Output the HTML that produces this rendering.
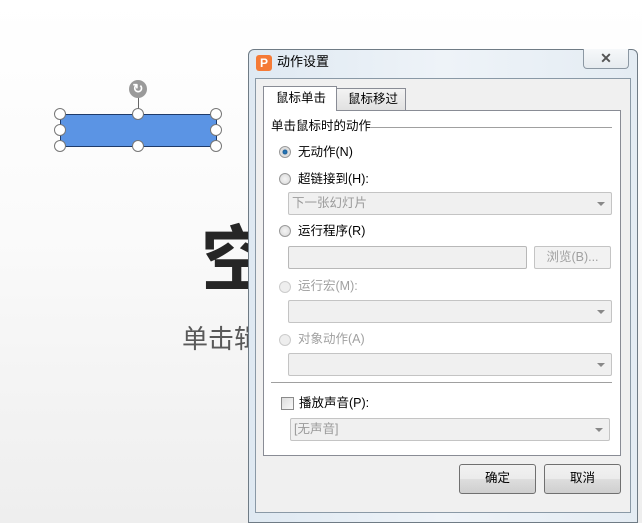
<!DOCTYPE html>
<html><head><meta charset="utf-8"><style>
*{margin:0;padding:0;box-sizing:border-box}
body{width:642px;height:523px;position:relative;overflow:hidden;background:linear-gradient(#fff 0%,#fafafa 45%,#eeeeee 100%);font-family:"Liberation Sans","Noto Sans CJK SC",sans-serif;font-size:12px;color:#000}
.a{position:absolute}
.h{position:absolute;width:12px;height:12px;border:1px solid #777;border-radius:50%;background:#fff}
.combo{position:absolute;height:23px;border:1px solid #c4c4c4;border-radius:2px;background:#f0f0f0;color:#9a9a9a;padding:0 3px;line-height:20px;font-size:12.5px}
.combo:after{content:"";position:absolute;right:6px;top:9px;border:4px solid transparent;border-top:4px solid #888}
.radio{position:absolute;width:12px;height:12px;border-radius:50%;border:1px solid #9a9a9a;background:radial-gradient(#f4f4f4,#d8d8d8)}
.lbl{position:absolute;font-size:12.5px;line-height:16px}
.btn{position:absolute;height:30px;border:1px solid #707070;border-radius:3px;background:linear-gradient(#f2f2f2 0%,#ebebeb 50%,#dddddd 51%,#cfcfcf 100%);text-align:center;line-height:27px;font-size:12.5px}
</style></head><body>
<div class="a" style="left:201px;top:218px;font-size:72px;font-weight:bold;color:#262626;line-height:1;font-family:'Noto Sans CJK SC',sans-serif">空</div>
<div class="a" style="left:182px;top:325px;font-size:26px;color:#595959;line-height:1;font-family:'Noto Sans CJK SC',sans-serif">单击辑</div>
<div class="a" style="left:60px;top:114px;width:157px;height:33px;background:#5b94e4;border:1px solid #1f3b6a"></div>
<div class="a" style="left:138px;top:96px;width:1px;height:18px;background:#666"></div>
<div class="a" style="left:129px;top:80px;width:18px;height:18px;border-radius:50%;background:#9a9a9a;color:#fff;font-size:13px;line-height:18px;text-align:center;font-weight:bold">↻</div>
<div class="h" style="left:54px;top:108px"></div><div class="h" style="left:132px;top:108px"></div><div class="h" style="left:210px;top:108px"></div>
<div class="h" style="left:54px;top:124px"></div><div class="h" style="left:210px;top:124px"></div>
<div class="h" style="left:54px;top:140px"></div><div class="h" style="left:132px;top:140px"></div><div class="h" style="left:210px;top:140px"></div>

<div class="a" style="left:248px;top:49px;width:390px;height:474px;border:1px solid #6f7b85;border-radius:6px 6px 0 0;background:linear-gradient(90deg,#dfe9f2,#eef3f8 50%,#e4ecf3)"></div>
<div class="a" style="left:583px;top:49px;width:46px;height:20px;border:1px solid #8c98a3;border-top:none;border-radius:0 0 4px 4px;background:linear-gradient(#f6f8fa,#e6ebef);text-align:center;color:#555;font-size:14px;line-height:18px;font-weight:bold">✕</div>
<div class="a" style="left:256px;top:55px;width:16px;height:16px;border-radius:3px;background:#f57a36;color:#fff;font-size:12px;font-weight:bold;line-height:16px;text-align:center">P</div>
<div class="a" style="left:277px;top:54px;font-size:13px;line-height:16px">动作设置</div>
<div class="a" style="left:255px;top:78px;width:376px;height:435px;background:#f0f0f0;border:1px solid #8a99a6"></div>
<div class="a" style="left:263px;top:110px;width:358px;height:346px;background:#fff;border:1px solid #898c95"></div>
<div class="a" style="left:336px;top:88px;width:70px;height:23px;border:1px solid #898c95;background:linear-gradient(#f3f3f3,#e1e1e1);font-size:12.5px;line-height:16px;padding:2px 0 0 11px">鼠标移过</div>
<div class="a" style="left:263px;top:86px;width:74px;height:25px;border:1px solid #898c95;border-bottom:none;background:#fff;font-size:12.5px;line-height:16px;padding:3px 0 0 12px">鼠标单击</div>
<div class="a" style="left:371px;top:127px;width:241px;height:1px;background:#a0a0a0"></div>
<div class="lbl" style="left:271px;top:118px">单击鼠标时的动作</div>
<div class="radio" style="left:279px;top:146px;background:radial-gradient(#2a7fc4 0,#1b5f9a 30%,#d9d9d9 40%,#eee 100%)"></div>
<div class="lbl" style="left:298px;top:144px">无动作(N)</div>
<div class="radio" style="left:279px;top:173px"></div>
<div class="lbl" style="left:298px;top:171px">超链接到(H):</div>
<div class="combo" style="left:288px;top:192px;width:324px">下一张幻灯片</div>
<div class="radio" style="left:279px;top:225px"></div>
<div class="lbl" style="left:298px;top:223px">运行程序(R)</div>
<div class="a" style="left:288px;top:246px;width:239px;height:23px;border:1px solid #b8b8b8;border-radius:2px;background:#f0f0f0"></div>
<div class="a" style="left:534px;top:246px;width:77px;height:23px;border:1px solid #c4c4c4;border-radius:2px;background:#f2f2f2;color:#a0a0a0;text-align:center;line-height:20px;font-size:12.5px">浏览(B)...</div>
<div class="radio" style="left:279px;top:281px;border-color:#ccc;background:#eee"></div>
<div class="lbl" style="left:298px;top:278px;color:#a0a0a0">运行宏(M):</div>
<div class="combo" style="left:288px;top:300px;width:324px"></div>
<div class="radio" style="left:279px;top:334px;border-color:#ccc;background:#eee"></div>
<div class="lbl" style="left:298px;top:331px;color:#a0a0a0">对象动作(A)</div>
<div class="combo" style="left:288px;top:353px;width:324px"></div>
<div class="a" style="left:271px;top:382px;width:341px;height:1px;background:#a0a0a0"></div>
<div class="a" style="left:281px;top:397px;width:13px;height:13px;border:1px solid #8a8a8a;background:linear-gradient(135deg,#ddd,#f8f8f8)"></div>
<div class="lbl" style="left:299px;top:395px">播放声音(P):</div>
<div class="combo" style="left:290px;top:418px;width:320px">[无声音]</div>
<div class="btn" style="left:459px;top:464px;width:77px">确定</div>
<div class="btn" style="left:544px;top:464px;width:77px">取消</div>
</body></html>
